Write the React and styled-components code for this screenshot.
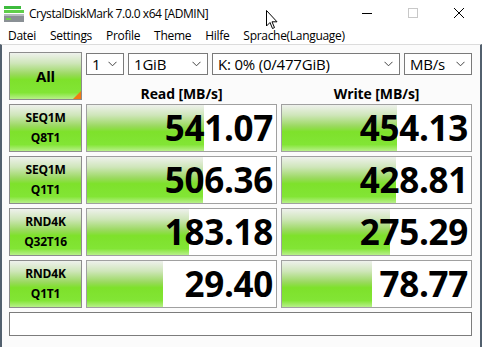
import React from "react";
import styled, { createGlobalStyle } from "styled-components";

const GlobalStyle = createGlobalStyle`
	html, body {
		margin: 0;
		padding: 0;
		background: #ffffff;
	}
	* {
		box-sizing: border-box;
	}
`;

const GREEN = `linear-gradient(180deg, #eef1ec 0%, #cfe6ba 22%, #9ad95f 46%, #7ee12b 58%, #82e535 86%, #b8f08a 100%)`;

const Window = styled.div`
	position: relative;
	width: 482px;
	height: 347px;
	display: flex;
	flex-direction: column;
	background: #ffffff;
	font-family: "Open Sans", "Noto Sans", sans-serif;
	color: #000;
	overflow: hidden;
`;

const TitleBar = styled.div`
	height: 27px;
	display: flex;
	align-items: center;
	padding-left: 4px;
`;

const TitleText = styled.span`
	font-size: 12px;
	margin-left: 5px;
	flex: 1;
	letter-spacing: -0.45px;
	padding-bottom: 1px;
`;

const Controls = styled.svg`
	flex-shrink: 0;
	display: block;
	align-self: flex-start;
`;

const MenuBar = styled.div`
	height: 19px;
	display: flex;
	align-items: center;
	padding-left: 1px;
`;

const MenuItem = styled.span`
	font-size: 12px;
	padding: 0 7px;
	letter-spacing: -0.3px;
`;

const Client = styled.div`
	flex: 1;
	border-top: 1px solid #dcdcdc;
	border-left: 2px solid #52606e;
	border-right: 2px solid #52606e;
	border-bottom: 2px solid #52606e;
	background: #fbfbfb;
	padding: 7px 8px 0 7px;
	display: grid;
	grid-template-columns: 73px 191px 191px;
	grid-auto-rows: 48px;
	column-gap: 4px;
	row-gap: 4px;
	align-content: start;
`;

const GreenButton = styled.div`
	position: relative;
	border: 1px solid #8c8c8c;
	background: ${GREEN};
	display: flex;
	flex-direction: column;
	align-items: center;
	justify-content: center;
	font-weight: 700;
	font-size: ${(p) => (p.$big ? "15px" : "12px")};
	line-height: 20px;
	letter-spacing: -0.2px;
`;

const Corner = styled.span`
	position: absolute;
	right: 0;
	bottom: 0;
	width: 0;
	height: 0;
	border-left: 8px solid transparent;
	border-bottom: 8px solid #f07a14;
`;

const TopRight = styled.div`
	grid-column: 2 / span 2;
	display: flex;
	flex-direction: column;
	padding-top: 1px;
`;

const SelectRow = styled.div`
	display: flex;
	gap: 4px;
	height: 25px;
`;

const Select = styled.div`
	width: ${(p) => p.$w}px;
	border: 1px solid #7a7a7a;
	background: #fff;
	display: flex;
	align-items: center;
	justify-content: space-between;
	padding: 0 6px 0 5px;
	font-size: 15px;
	letter-spacing: -0.2px;
`;

const Headers = styled.div`
	flex: 1;
	display: grid;
	grid-template-columns: 191px 191px;
	column-gap: 4px;
	align-items: center;
`;

const Header = styled.div`
	text-align: center;
	font-weight: 700;
	font-size: 14px;
	padding-top: 9px;
	letter-spacing: -0.1px;
`;

const ValueBox = styled.div`
	position: relative;
	border: 1px solid #a0a0a0;
	background: #fff;
	overflow: hidden;
	display: flex;
	align-items: center;
	justify-content: flex-end;
	padding-right: 3px;
`;

const Fill = styled.div`
	position: absolute;
	left: 0;
	top: 0;
	bottom: 0;
	background: ${GREEN};
`;

const Value = styled.span`
	position: relative;
	font-weight: 700;
	font-size: 35px;
	letter-spacing: -0.3px;
	line-height: 1;
	padding-bottom: 1px;
`;

const Comment = styled.div`
	grid-column: 1 / span 3;
	height: 24px;
	border: 1px solid #7c7c7c;
	background: #fff;
`;

const Cursor = styled.svg`
	position: absolute;
	left: 266px;
	top: 10px;
`;

const Chevron = () => (
	<svg width="9" height="6" viewBox="0 0 9 6">
		<path d="M0.5 0.8 L4.5 4.8 L8.5 0.8" fill="none" stroke="#444" strokeWidth="1" />
	</svg>
);

const AppIcon = () => (
	<svg width="20" height="18" viewBox="0 0 20 18">
		<rect x="0" y="1" width="17" height="3" fill="#3dbb3d" />
		<rect x="0" y="5" width="20" height="3" fill="#5fcf4a" />
		<rect x="0" y="9" width="20" height="8" fill="#8a9095" />
		<rect x="0" y="9" width="20" height="2" fill="#b8bdc0" />
		<rect x="2" y="13" width="5" height="2" fill="#6fd24c" />
	</svg>
);

// minimize, maximize (greyed out) and close glyphs, each in a 46px slot
const WindowControls = () => (
	<Controls width="138" height="27" viewBox="0 0 138 27">
		<path d="M18 13.5 H28" stroke="#000" strokeWidth="1" />
		<rect x="64.5" y="8.5" width="9" height="9" fill="none" stroke="#c8c8c8" strokeWidth="1" />
		<path d="M110 8 L120 18 M120 8 L110 18" stroke="#000" strokeWidth="1" />
	</Controls>
);

const rows = [
	{ a: "SEQ1M", b: "Q8T1", read: 541.07, write: 454.13 },
	{ a: "SEQ1M", b: "Q1T1", read: 506.36, write: 428.81 },
	{ a: "RND4K", b: "Q32T16", read: 183.18, write: 275.29 },
	{ a: "RND4K", b: "Q1T1", read: 29.4, write: 78.77 },
];

// bar length grows with log10 of the score, like the original
const barWidth = (v) => `${(0.155 + 0.17 * Math.log10(v)) * 100}%`;

const Result = ({ value }) => (
	<ValueBox>
		<Fill style={{ width: barWidth(value) }} />
		<Value>{value.toFixed(2)}</Value>
	</ValueBox>
);

export default function App() {
	return (
		<>
			<GlobalStyle />
			<Window>
				<TitleBar>
					<AppIcon />
					<TitleText>CrystalDiskMark 7.0.0 x64 [ADMIN]</TitleText>
					<WindowControls />
				</TitleBar>
				<MenuBar>
					<MenuItem>Datei</MenuItem>
					<MenuItem>Settings</MenuItem>
					<MenuItem>Profile</MenuItem>
					<MenuItem>Theme</MenuItem>
					<MenuItem>Hilfe</MenuItem>
					<MenuItem>Sprache(Language)</MenuItem>
				</MenuBar>
				<Client>
					<GreenButton $big>
						All
						<Corner />
					</GreenButton>
					<TopRight>
						<SelectRow>
							<Select $w={38}>
								1<Chevron />
							</Select>
							<Select $w={80}>
								1GiB<Chevron />
							</Select>
							<Select $w={188}>
								K: 0% (0/477GiB)<Chevron />
							</Select>
							<Select $w={68}>
								MB/s<Chevron />
							</Select>
						</SelectRow>
						<Headers>
							<Header>Read [MB/s]</Header>
							<Header>Write [MB/s]</Header>
						</Headers>
					</TopRight>
					{rows.map((r, i) => (
						<React.Fragment key={i}>
							<GreenButton>
								<span>{r.a}</span>
								<span>{r.b}</span>
							</GreenButton>
							<Result value={r.read} />
							<Result value={r.write} />
						</React.Fragment>
					))}
					<Comment />
				</Client>
				<Cursor width="13" height="20" viewBox="0 0 13 20">
					<path d="M0.5 0.5 L0.5 16 L4 12.5 L6.5 18.5 L8.5 17.6 L6 11.8 L11 11.8 Z" fill="#fff" stroke="#000" strokeWidth="1" />
				</Cursor>
			</Window>
		</>
	);
}
